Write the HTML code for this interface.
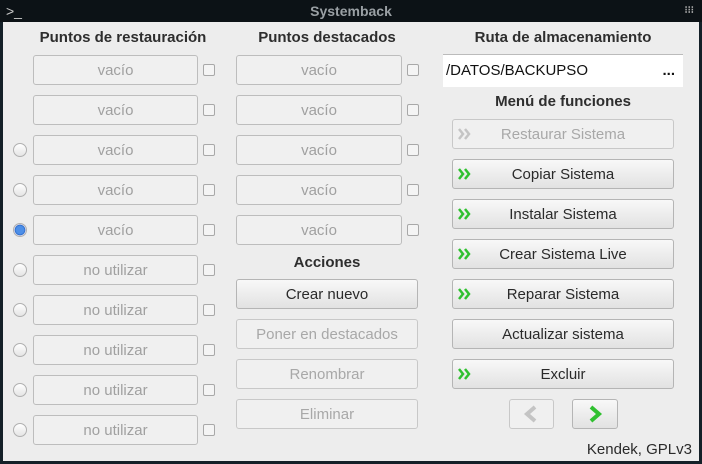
<!DOCTYPE html><html><head><style>
body{margin:0;width:702px;height:464px;background:#142028;font-family:"Liberation Sans",sans-serif;position:relative;overflow:hidden}
.t{position:absolute;left:0;top:0;width:702px;height:22px;background:#0c1216;color:#9aa0a4;font-weight:bold;font-size:14px;text-align:center;line-height:22px}
.c{position:absolute;left:3px;top:22px;width:696px;height:439px;background:#ededed}
.a{position:absolute}
.h{position:absolute;font-weight:bold;font-size:15px;color:#2e2e2e;text-align:center}
.f{position:absolute;height:28px;border:1px solid #bdbdbd;border-radius:3px;background:#f0f0f0;color:#a0a0a0;font-size:15px;text-align:center;line-height:29px;box-sizing:content-box}
.cb{position:absolute;width:10px;height:10px;border:1px solid #a8a8a8;border-radius:2px;background:#f4f4f4}
.r{position:absolute;left:13px;width:12px;height:12px;border:1px solid #b0b0b0;border-radius:50%;background:linear-gradient(#fff,#e4e4e4)}
.b{position:absolute;height:28px;border:1px solid #b5b5b5;border-radius:3px;background:linear-gradient(#f8f8f8,#e2e2e2);color:#2a2a2a;font-size:15px;text-align:center;line-height:29px}
.d{background:#f0f0f0;color:#a8a8a8;border-color:#c8c8c8}
.g{position:absolute;left:5px;top:7px}
</style></head><body>
<div class="t">Systemback<span style="position:absolute;left:6px;font-weight:normal;color:#ccc">&gt;_</span><span style="position:absolute;right:8px;font-size:10px;color:#aaa">⁝⁝⁝</span></div>
<div class="c"></div>
<div class="h" style="left:33px;top:29px;width:180px">Puntos de restauración</div>
<div class="h" style="left:236px;top:29px;width:182px">Puntos destacados</div>
<div class="h" style="left:443px;top:29px;width:240px">Ruta de almacenamiento</div>
<div class="a" style="left:443px;top:54px;width:237px;padding-left:3px;height:32px;background:#fff;border-top:1px solid #bbb;font-size:15px;line-height:32px;color:#111">/DATOS/BACKUPSO<span style="position:absolute;right:8px;font-weight:bold">...</span></div>
<div class="h" style="left:443px;top:93px;width:240px">Menú de funciones</div>
<div class="h" style="left:236px;top:254px;width:182px">Acciones</div>

<div class="f" style="left:33px;top:55px;width:163px">vacío</div><div class="cb" style="left:203px;top:64px"></div>
<div class="f" style="left:33px;top:95px;width:163px">vacío</div><div class="cb" style="left:203px;top:104px"></div>
<div class="r" style="top:143px"></div><div class="f" style="left:33px;top:135px;width:163px">vacío</div><div class="cb" style="left:203px;top:144px"></div>
<div class="r" style="top:183px"></div><div class="f" style="left:33px;top:175px;width:163px">vacío</div><div class="cb" style="left:203px;top:184px"></div>
<div class="r" style="top:223px;background:radial-gradient(circle,#4d8fe8 45%,#2a6ac8 60%,#dde 65%)"></div><div class="f" style="left:33px;top:215px;width:163px">vacío</div><div class="cb" style="left:203px;top:224px"></div>
<div class="r" style="top:263px"></div><div class="f" style="left:33px;top:255px;width:163px">no utilizar</div><div class="cb" style="left:203px;top:264px"></div>
<div class="r" style="top:303px"></div><div class="f" style="left:33px;top:295px;width:163px">no utilizar</div><div class="cb" style="left:203px;top:304px"></div>
<div class="r" style="top:343px"></div><div class="f" style="left:33px;top:335px;width:163px">no utilizar</div><div class="cb" style="left:203px;top:344px"></div>
<div class="r" style="top:383px"></div><div class="f" style="left:33px;top:375px;width:163px">no utilizar</div><div class="cb" style="left:203px;top:384px"></div>
<div class="r" style="top:423px"></div><div class="f" style="left:33px;top:415px;width:163px">no utilizar</div><div class="cb" style="left:203px;top:424px"></div>

<div class="f" style="left:236px;top:55px;width:164px">vacío</div><div class="cb" style="left:407px;top:64px"></div>
<div class="f" style="left:236px;top:95px;width:164px">vacío</div><div class="cb" style="left:407px;top:104px"></div>
<div class="f" style="left:236px;top:135px;width:164px">vacío</div><div class="cb" style="left:407px;top:144px"></div>
<div class="f" style="left:236px;top:175px;width:164px">vacío</div><div class="cb" style="left:407px;top:184px"></div>
<div class="f" style="left:236px;top:215px;width:164px">vacío</div><div class="cb" style="left:407px;top:224px"></div>

<div class="b" style="left:236px;top:279px;width:180px">Crear nuevo</div>
<div class="b d" style="left:236px;top:319px;width:180px">Poner en destacados</div>
<div class="b d" style="left:236px;top:359px;width:180px">Renombrar</div>
<div class="b d" style="left:236px;top:399px;width:180px">Eliminar</div>

<div class="b d" style="left:452px;top:119px;width:220px"><svg class="g" width="14" height="14"><path d="M1 2L5 7L1 12M7 2L11 7L7 12" stroke="#c4c4c4" stroke-width="2.5" fill="none"/></svg>Restaurar Sistema</div>
<div class="b" style="left:452px;top:159px;width:220px"><svg class="g" width="14" height="14"><path d="M1 2L5 7L1 12M7 2L11 7L7 12" stroke="#30c030" stroke-width="2.5" fill="none"/></svg>Copiar Sistema</div>
<div class="b" style="left:452px;top:199px;width:220px"><svg class="g" width="14" height="14"><path d="M1 2L5 7L1 12M7 2L11 7L7 12" stroke="#30c030" stroke-width="2.5" fill="none"/></svg>Instalar Sistema</div>
<div class="b" style="left:452px;top:239px;width:220px"><svg class="g" width="14" height="14"><path d="M1 2L5 7L1 12M7 2L11 7L7 12" stroke="#30c030" stroke-width="2.5" fill="none"/></svg>Crear Sistema Live</div>
<div class="b" style="left:452px;top:279px;width:220px"><svg class="g" width="14" height="14"><path d="M1 2L5 7L1 12M7 2L11 7L7 12" stroke="#30c030" stroke-width="2.5" fill="none"/></svg>Reparar Sistema</div>
<div class="b" style="left:452px;top:319px;width:220px">Actualizar sistema</div>
<div class="b" style="left:452px;top:359px;width:220px"><svg class="g" width="14" height="14"><path d="M1 2L5 7L1 12M7 2L11 7L7 12" stroke="#30c030" stroke-width="2.5" fill="none"/></svg>Excluir</div>
<div class="b d" style="left:509px;top:399px;width:43px"><svg width="43" height="28"><path d="M25 7 L17 14 L25 21" stroke="#c4c4c4" stroke-width="4" fill="none"/></svg></div>
<div class="b" style="left:572px;top:399px;width:44px"><svg width="44" height="28"><path d="M18 7 L26 14 L18 21" stroke="#30c030" stroke-width="4" fill="none"/></svg></div>
<div class="a" style="right:10px;top:441px;font-size:15px;color:#2a2a2a">Kendek, GPLv3</div>
</body></html>
